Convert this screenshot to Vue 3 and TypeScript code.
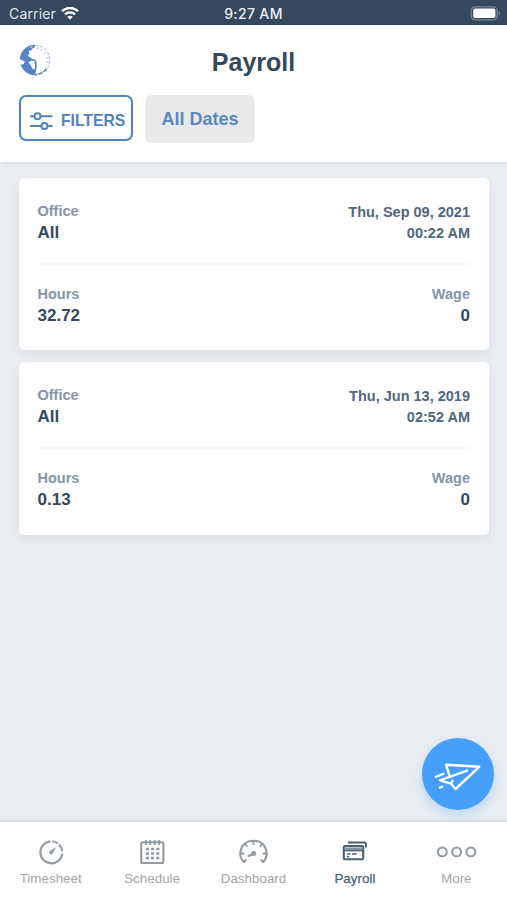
<script setup lang="ts">
interface PayrollEntry {
  office: string
  date: string
  time: string
  hours: string
  wage: string
}

const entries: PayrollEntry[] = [
  { office: 'All', date: 'Thu, Sep 09, 2021', time: '00:22 AM', hours: '32.72', wage: '0' },
  { office: 'All', date: 'Thu, Jun 13, 2019', time: '02:52 AM', hours: '0.13', wage: '0' },
]

const tabs: string[] = ['Timesheet', 'Schedule', 'Dashboard', 'Payroll', 'More']
const activeTab = 'Payroll'
</script>

<template>
  <div class="screen">
    <div class="status">
      <div class="carrier">
        <span>Carrier</span>
        <svg width="18" height="14" viewBox="0 0 18 14" fill="none" stroke="#fff" stroke-width="2.4">
          <path d="M1 4.2C5.5-.1 12.5-.1 17 4.2" />
          <path d="M4 7.3C6.8 4.7 11.2 4.7 14 7.3" />
          <path d="M6.2 9.8Q9 7.5 11.8 9.8L9 12.7Z" fill="#fff" stroke="none" />
        </svg>
      </div>
      <span class="clock">9:27 AM</span>
      <svg class="battery" width="31" height="15" viewBox="0 0 31 15">
        <rect x="1.2" y=".8" width="26" height="13" rx="4" fill="none" stroke="#73859a" stroke-width="1.3" />
        <rect x="3.2" y="2.6" width="22.2" height="9.4" rx="2" fill="#fff" />
        <path d="M28.7 4.8Q31.5 7.3 28.7 9.8Z" fill="#73859a" />
      </svg>
    </div>

    <header class="header">
      <div class="title-row">
        <svg class="logo" width="32" height="32" viewBox="0 0 32 32">
          <path d="M16 .8A15.1 15.1 0 0 0 16 31.2Z" fill="#5584c0" />
          <path d="M16 3L13.5 4.5L12 6.5L9.5 7L10.5 9.5L8.5 12L11 13L13 15L16.5 15.5Z" fill="#fff" />
          <path d="M.8 15L3 16.2L5.8 17.2L4.8 20L2.2 20.8L1.2 20Z" fill="#fff" />
          <path d="M9.3 18.2L12.5 16.8L16 17L16 26L13.8 25L11.8 21.5Z" fill="#fff" />
          <path d="M15.4 17L17.2 16.2C18.2 20 17.9 25 16 30L14.4 29.5C16.2 25 16.5 21 15.4 17Z" fill="#5584c0" />
          <path d="M11 2.5L14 1.8L13 4L10.6 4.4Z" fill="#a7c0df" />
          <path d="M16 1.2A14.8 14.8 0 0 1 30.8 16A14.8 14.8 0 0 1 26 27" fill="none" stroke="#a5bbd9" stroke-width="1" stroke-dasharray="3.5 1.3" />
          <path d="M27.5 25A14.5 14.5 0 0 1 16 30.5" fill="none" stroke="#5d88c1" stroke-width="1.8" stroke-dasharray="4.2 1.2" />
          <path d="M18.5 3.2v2.2M22.8 4.6l-.8 1.7M27 8.5l-1.6 1.1M29.7 13.5l-2.2.5M29.7 18.5l-2.2-.5M27.3 24l-1.6-1.2M22.5 28l-.8-1.8" stroke="#9db4d6" stroke-width="1" />
        </svg>
        <h1>Payroll</h1>
      </div>
      <div class="filters">
        <button class="filter-btn" type="button">
          <svg width="24" height="20" viewBox="0 0 24 20" fill="none" stroke="#5283bd" stroke-width="2">
            <path d="M1 5.3h4.4M11.5 5.3h12M1 14.9h11.3M18.5 14.9h5" />
            <circle cx="8.5" cy="5.3" r="3" />
            <circle cx="15.5" cy="14.9" r="3" />
          </svg>
          <span>FILTERS</span>
        </button>
        <button class="dates-btn" type="button">All Dates</button>
      </div>
    </header>

    <main class="content">
      <article v-for="entry in entries" :key="entry.date" class="card">
        <div class="row row-top">
          <div>
            <div class="label">Office</div>
            <div class="value">{{ entry.office }}</div>
          </div>
          <div class="stamp">
            <div>{{ entry.date }}</div>
            <div>{{ entry.time }}</div>
          </div>
        </div>
        <div class="row">
          <div>
            <div class="label">Hours</div>
            <div class="value">{{ entry.hours }}</div>
          </div>
          <div class="right">
            <div class="label">Wage</div>
            <div class="value">{{ entry.wage }}</div>
          </div>
        </div>
      </article>
      <button class="fab" type="button" aria-label="Send">
        <svg width="48" height="32" viewBox="0 0 48 32" fill="none" stroke="#fff" stroke-width="2.4" stroke-linejoin="round" stroke-linecap="round">
          <path d="M15.5 16L12.2 4.8L45.2 6.8L21.5 29L17 23.6L6 20.3L33 10.6" />
          <path d="M17 23.6L18.5 20.8M2 16.8L9.3 13.9M6 27.6L8.2 26.7" />
        </svg>
      </button>
    </main>

    <nav class="tabs">
      <div v-for="tab in tabs" :key="tab" class="tab" :class="{ active: tab === activeTab }">
        <svg width="42" height="30" viewBox="0 0 42 30" fill="none" stroke="currentColor" stroke-width="2.1">
          <template v-if="tab === 'Timesheet'">
            <path d="M20.4 4.4A11 11 0 1 0 32.3 16.5M22.2 4.3A11 11 0 0 1 27.7 6.3M29 7.4A11 11 0 0 1 32.3 14.3" />
            <path d="M26.2 10.3L22.9 16.2Q21 18 19.6 16.7Q18.4 15 20.3 13.5Z" fill="currentColor" stroke="none" />
          </template>
          <template v-else-if="tab === 'Schedule'">
            <rect x="10.2" y="5.3" width="22.2" height="20.7" rx="1.5" />
            <path d="M15 3v5M19.2 3v5M23.7 3v5M28.2 3v5" stroke-width="1.9" />
            <path d="M14.8 12h13.6M14.8 16.5h13.6M14.8 21h13.6" stroke-width="2.3" stroke-dasharray="3.2 2" />
          </template>
          <template v-else-if="tab === 'Dashboard'">
            <path d="M14.3 22.5L11.9 25C5 18 8.4 3.8 21.5 3.8S38 18 31.1 25L28.7 22.5" stroke-linejoin="round" />
            <path d="M21.5 4v4M13 7.2l2.3 2.5M30 7.2l-2.3 2.5M9 16.5h3.2M34 16.5h-3.2" stroke-width="1.8" />
            <path d="M16.5 19L21 17" stroke-linecap="round" />
            <circle cx="21.7" cy="16.5" r="2.5" fill="currentColor" stroke="none" />
          </template>
          <template v-else-if="tab === 'Payroll'">
            <rect x="9.8" y="9" width="19.4" height="13.3" rx="1.5" />
            <path d="M10.5 11.8h18" stroke="#8795a3" stroke-width="2.7" />
            <path d="M10 13.7h19" stroke-width="1.3" />
            <path d="M14 5.5h16.5q1.4 0 1.4 1.4v3.5" />
            <path d="M13 17h3.5M18 17h4.5M13 19.7h2" stroke-width="1.5" />
          </template>
          <template v-else>
            <circle cx="7.3" cy="14.9" r="4.4" />
            <circle cx="21.6" cy="14.9" r="4.4" />
            <circle cx="35.9" cy="14.9" r="4.4" />
          </template>
        </svg>
        <span>{{ tab }}</span>
      </div>
    </nav>
  </div>
</template>

<style>
body {
  margin: 0;
}
</style>

<style scoped>
.screen {
  display: flex;
  flex-direction: column;
  box-sizing: border-box;
  width: 507px;
  height: 900px;
  overflow: hidden;
  background: #e9edf1;
  font-family: "Liberation Sans", Arial, sans-serif;
  color: #34495e;
}

.screen * {
  box-sizing: border-box;
}

svg {
  display: block;
  flex: none;
}

button {
  margin: 0;
  border: 0;
  font: inherit;
}

.status {
  display: grid;
  grid-template-columns: 1fr auto 1fr;
  align-items: center;
  flex: none;
  height: 25px;
  padding: 2px 6px 0 9px;
  background: #34495e;
  color: #fff;
  font: 14px/20px Inter, sans-serif;
}

.carrier {
  display: flex;
  gap: 5px;
  align-items: center;
  color: #dfe5ea;
  letter-spacing: 0.15px;
}

.clock {
  margin-right: 3px;
  font-weight: 500;
  letter-spacing: 0.35px;
  color: #edf1f4;
}

.battery {
  justify-self: end;
}

.header {
  position: relative;
  z-index: 1;
  flex: none;
  height: 137px;
  padding: 19px 19px 0;
  background: #fff;
  box-shadow: 0 1px 6px rgba(60, 70, 80, 0.13);
}

.title-row {
  display: grid;
  grid-template-columns: 32px 1fr 32px;
  align-items: center;
  height: 36px;
}

.logo {
  margin-top: -4px;
}

h1 {
  margin: 0;
  text-align: center;
  font-size: 25px;
  line-height: 36px;
}

.filters {
  display: flex;
  gap: 12px;
  margin-top: 15px;
}

.filter-btn {
  display: flex;
  align-items: center;
  gap: 8px;
  width: 114px;
  height: 46px;
  padding: 6px 0 0 8px;
  border: 2px solid #5283bd;
  border-radius: 7px;
  background: #fff;
  color: #5283bd;
  font-size: 15.7px;
  font-weight: 700;
}

.dates-btn {
  width: 110px;
  height: 48px;
  padding: 0;
  border-radius: 7px;
  background: #e9e9eb;
  color: #5b88be;
  font-size: 18px;
  font-weight: 700;
}

.content {
  position: relative;
  display: flex;
  flex-direction: column;
  gap: 12px;
  flex: 1;
  padding: 16px 18px 0 19px;
}

.card {
  height: 172.4px;
  padding: 0 19px 0 18.5px;
  border-radius: 5px;
  background: #fff;
  box-shadow: 0 4px 10px rgba(60, 80, 80, 0.08);
}

.row {
  display: flex;
  justify-content: space-between;
  padding-top: 19px;
}

.row-top {
  height: 87px;
  padding-top: 23px;
  border-bottom: 2px solid #f7f8f9;
}

.label {
  color: #8594a6;
  font-size: 14.5px;
  font-weight: 700;
  line-height: 21px;
}

.value {
  color: #34485b;
  font-size: 17px;
  font-weight: 700;
  line-height: 21px;
}

.stamp {
  color: #506680;
  font-size: 14.5px;
  font-weight: 700;
  line-height: 21px;
  padding-top: 1px;
  text-align: right;
}

.right {
  text-align: right;
}

.fab {
  position: absolute;
  right: 13px;
  bottom: 12px;
  display: flex;
  justify-content: center;
  align-items: center;
  width: 72px;
  height: 72px;
  padding: 4px 0 0;
  border-radius: 50%;
  background: #479ffc;
  box-shadow: 0 5px 12px rgba(69, 157, 252, 0.28);
}

.tabs {
  position: relative;
  display: grid;
  grid-template-columns: repeat(5, 1fr);
  flex: none;
  height: 78px;
  padding-top: 15px;
  background: #fff;
  box-shadow: 0 -1px 3px rgba(60, 70, 80, 0.16);
}

.tab {
  display: flex;
  flex-direction: column;
  align-items: center;
  color: #939ba4;
}

.tab span {
  padding-top: 1px;
  color: #a2a6aa;
  font-size: 13.4px;
  line-height: 22px;
}

.tab.active {
  color: #4b6074;
}

.tab.active span {
  color: #4b6074;
  -webkit-text-stroke: 0.25px #4b6074;
}
</style>
